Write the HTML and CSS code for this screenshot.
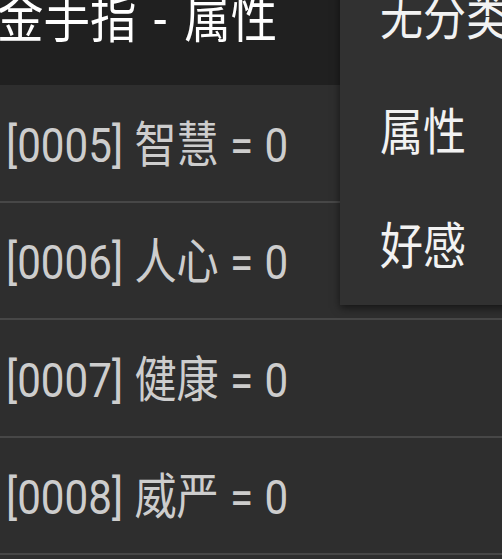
FILE: index.html
```html
<!DOCTYPE html>
<html lang="zh-CN">
<head>
<meta charset="utf-8">
<link rel="stylesheet" href="styles.css">
</head>
<body>
<div class="screen">
  <header class="appbar">
    <span class="title">金手指 - 属性</span>
  </header>
  <ul class="list">
    <li class="row"><span class="label">[0005] 智慧 = 0</span></li>
    <li class="row"><span class="label">[0006] 人心 = 0</span></li>
    <li class="row"><span class="label">[0007] 健康 = 0</span></li>
    <li class="row"><span class="label">[0008] 威严 = 0</span></li>
  </ul>
  <div class="menu">
    <div class="menu-item"><span class="menu-text">无分类</span></div>
    <div class="menu-item"><span class="menu-text">属性</span></div>
    <div class="menu-item"><span class="menu-text">好感</span></div>
  </div>
</div>
</body>
</html>
```

FILE: styles.css
```css
html, body {
  margin: 0;
  padding: 0;
  background: #2e2e2e;
}
body {
  font-family: Roboto, "Noto Sans CJK SC", sans-serif;
  overflow: hidden;
}
.screen {
  position: relative;
  width: 502px;
  height: 559px;
  overflow: hidden;
  background: #2e2e2e;
}
.appbar {
  height: 85px;
  background: #202020;
  display: flex;
  align-items: flex-start;
  overflow: hidden;
}
.title {
  display: inline-block;
  color: #ffffff;
  font-size: 54px;
  line-height: 60px;
  margin-top: -10px;
  margin-left: -3px;
  word-spacing: 7px;
  white-space: nowrap;
  transform: scaleX(0.86);
  transform-origin: left center;
}
.list {
  list-style: none;
  margin: 0;
  padding: 0;
}
.row {
  height: 115.5px;
  border-bottom: 2px solid #474747;
  display: flex;
  align-items: center;
  box-sizing: content-box;
}
.label {
  display: inline-block;
  color: #cdcdcd;
  font-size: 49px;
  line-height: 58px;
  margin-left: 6px;
  padding-top: 6px;
  word-spacing: 1px;
  white-space: nowrap;
  transform: scaleX(0.86);
  transform-origin: left center;
}
.menu {
  position: absolute;
  left: 340px;
  top: -39px;
  width: 200px;
  background: #313131;
  box-shadow: 0 3px 8px rgba(0, 0, 0, 0.55);
}
.menu-item {
  height: 114.5px;
  display: flex;
  align-items: center;
  padding-left: 40px;
}
.menu-text {
  display: inline-block;
  color: #f2f2f2;
  font-size: 50px;
  line-height: 58px;
  white-space: nowrap;
  transform: scaleX(0.86);
  transform-origin: left center;
}
```
